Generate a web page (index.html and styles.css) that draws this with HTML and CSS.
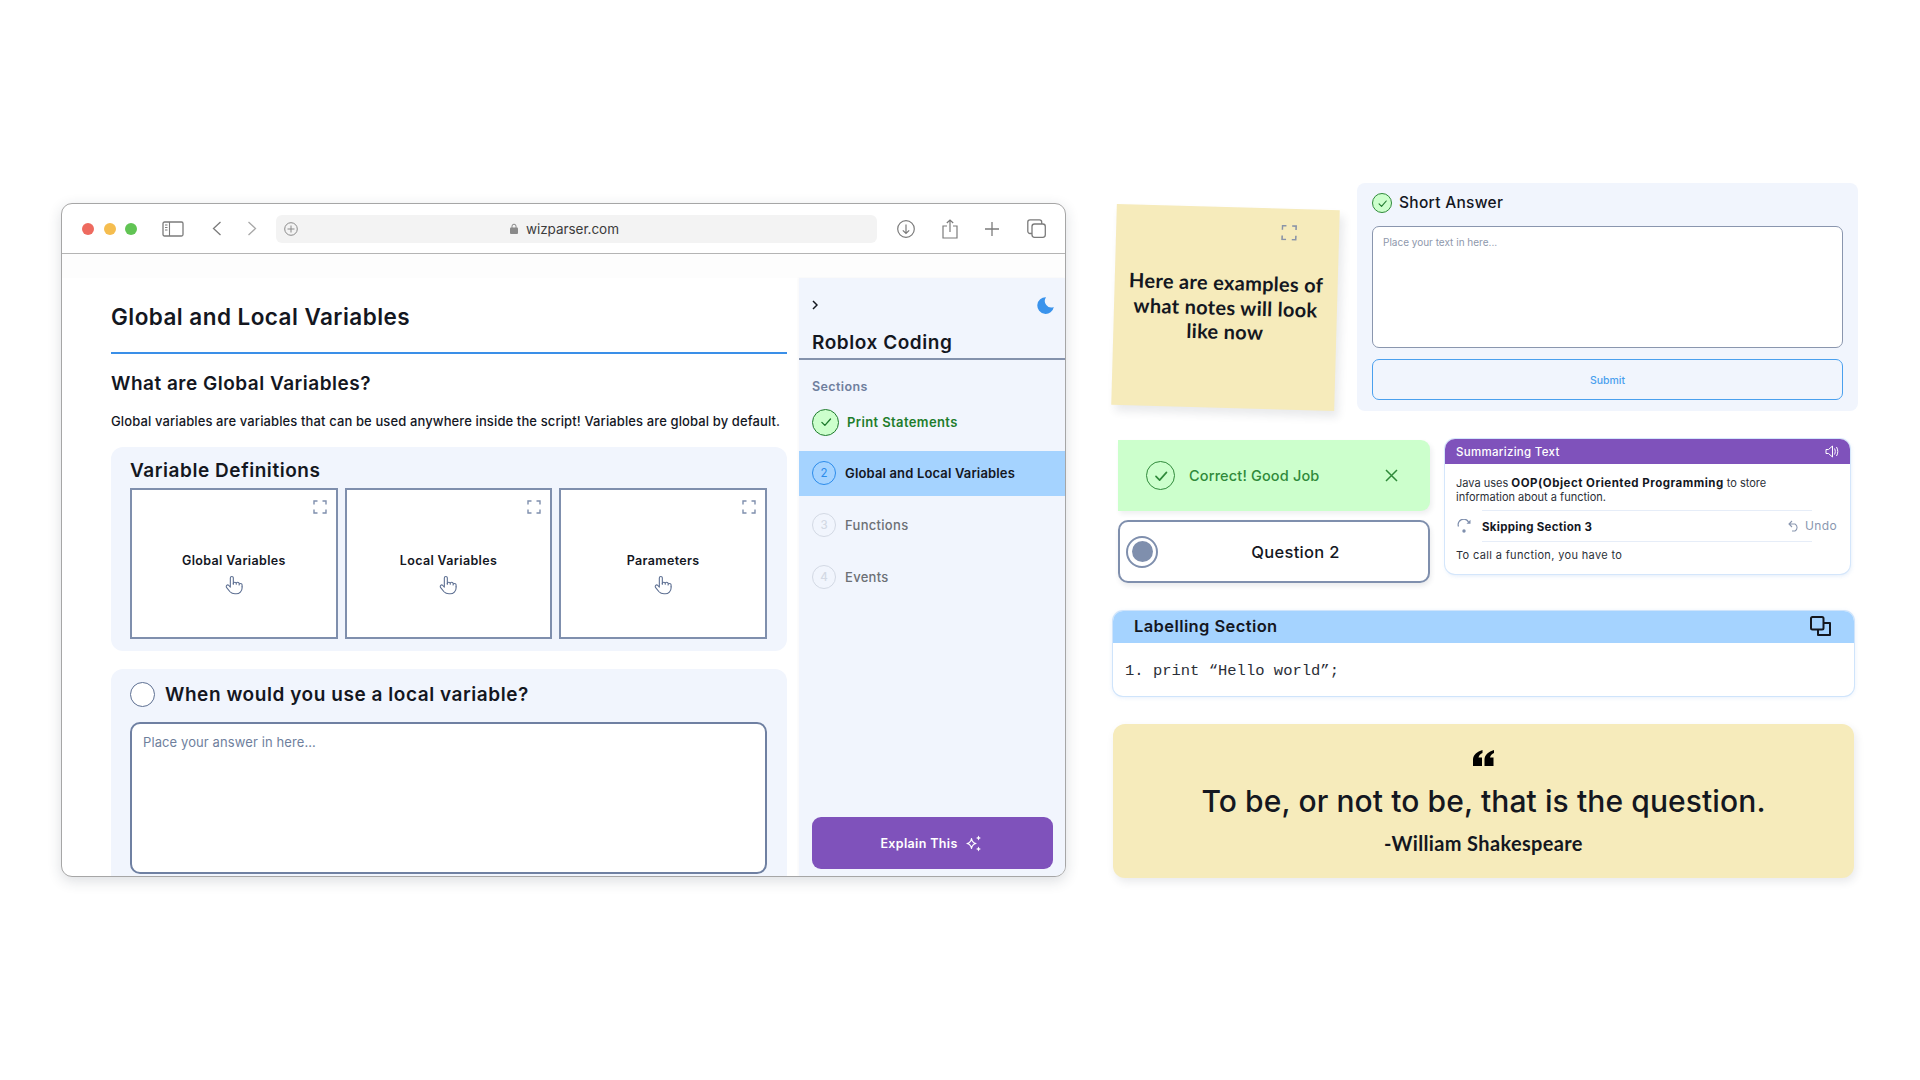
FILE: index.html
```html
<!DOCTYPE html>
<html lang="en">
<head>
<meta charset="utf-8">
<title>Wizparser UI components</title>
<link rel="stylesheet" href="styles.css">
</head>
<body>
<svg class="defs" width="0" height="0" aria-hidden="true">
  <symbol id="expand" viewBox="0 0 14 14"><path d="M1 4.500V1h3.500M9.500 1H13v3.500M13 9.500V13H9.500M4.500 13H1V9.500" fill="none" stroke="currentColor" stroke-width="1.400"/></symbol>
  <symbol id="hand" viewBox="0 0 24 24"><g fill="none" stroke="currentColor" stroke-width="1.300" stroke-linecap="round" stroke-linejoin="round"><path d="M20.500 14v-2a1.800 1.800 0 0 0-3.600 0M17 11.500v-1a1.800 1.800 0 0 0-3.600 0M13.500 11v-.5a1.800 1.800 0 0 0-3.600 0"/><path d="M10 11V3.500a1.800 1.800 0 0 0-3.600 0V14.500L4.600 12.600a1.800 1.800 0 0 0-2.600 2.500l4 5c1.500 1.600 3.200 2.400 6 2.400h1.500a7 7 0 0 0 7-7V14"/></g></symbol>
  <symbol id="check" viewBox="0 0 24 24"><path d="M6.500 12.500l4 4 7.500-8.500" fill="none" stroke="currentColor" stroke-width="1.800" stroke-linecap="round" stroke-linejoin="round"/></symbol>
</svg>

<main class="page">
  <section class="window">
    <header class="toolbar">
      <span class="dot dot-red"></span><span class="dot dot-amber"></span><span class="dot dot-green"></span>
      <svg class="tool tool-side" width="22" height="16" viewBox="0 0 22 16"><rect x="1" y="1" width="20" height="14" rx="1.500" fill="none" stroke="currentColor" stroke-width="1.300"/><path d="M7.500 1v14M3 4h2.500M3 6.500h2.500M3 9h2.500" fill="none" stroke="currentColor" stroke-width="1.100"/></svg>
      <svg class="tool tool-back" width="10" height="15" viewBox="0 0 10 15"><path d="M8.500 1L1.500 7.500l7 6.500" fill="none" stroke="currentColor" stroke-width="1.300"/></svg>
      <svg class="tool tool-fwd" width="10" height="15" viewBox="0 0 10 15"><path d="M1.500 1l7 6.500-7 6.500" fill="none" stroke="#a8a8a8" stroke-width="1.300"/></svg>
      <div class="urlbar">
        <svg class="url-plus" width="14" height="14" viewBox="0 0 14 14"><circle cx="7" cy="7" r="6.300" fill="none" stroke="currentColor" stroke-width="1"/><path d="M7 3.500v7M3.500 7h7" stroke="currentColor" stroke-width="1"/></svg>
        <svg class="url-lock" width="8" height="11" viewBox="0 0 8 11"><path d="M2 5V3.200a2 2 0 0 1 4 0V5" fill="none" stroke="currentColor" stroke-width="1"/><rect y="4.500" width="8" height="6.500" rx="1" fill="currentColor"/></svg>
        <span class="url-text">wizparser.com</span>
      </div>
      <svg class="tool tool-dl" width="18" height="18" viewBox="0 0 18 18"><circle cx="9" cy="9" r="8.300" fill="none" stroke="currentColor" stroke-width="1.200"/><path d="M9 4.500v9M5.800 10.300L9 13.500l3.200-3.200" fill="none" stroke="currentColor" stroke-width="1.200"/></svg>
      <svg class="tool tool-share" width="16" height="20" viewBox="0 0 16 20"><path d="M5 7H1v12h14V7h-4M8 13V1M4.800 4L8 1l3.200 3" fill="none" stroke="currentColor" stroke-width="1.200"/></svg>
      <svg class="tool tool-plus" width="14" height="14" viewBox="0 0 14 14"><path d="M7 0v14M0 7h14" fill="none" stroke="currentColor" stroke-width="1.300"/></svg>
      <svg class="tool tool-tabs" width="19" height="19" viewBox="0 0 19 19"><rect x="5" y="5" width="13.300" height="13.300" rx="2.500" fill="none" stroke="currentColor" stroke-width="1.300"/><path d="M5 14.500H3a2.200 2.200 0 0 1-2.200-2.200V3A2.200 2.200 0 0 1 3 .8h9.500A2.200 2.200 0 0 1 14.700 3v2" fill="none" stroke="currentColor" stroke-width="1.300"/></svg>
    </header>
    <div class="band"></div>
    <div class="app">
      <div class="content">
        <h1 class="page-title">Global and Local Variables</h1>
        <h2 class="section-title">What are Global Variables?</h2>
        <p class="lead">Global variables are variables that can be used anywhere inside the script! Variables are global by default.</p>

        <section class="panel panel-defs">
          <h3 class="panel-title">Variable Definitions</h3>
          <div class="flip-grid">
            <div class="flip"><svg class="flip-expand"><use href="#expand"/></svg><span class="flip-label">Global Variables</span><svg class="flip-hand"><use href="#hand"/></svg></div>
            <div class="flip"><svg class="flip-expand"><use href="#expand"/></svg><span class="flip-label">Local Variables</span><svg class="flip-hand"><use href="#hand"/></svg></div>
            <div class="flip"><svg class="flip-expand"><use href="#expand"/></svg><span class="flip-label">Parameters</span><svg class="flip-hand"><use href="#hand"/></svg></div>
          </div>
        </section>

        <section class="panel panel-question">
          <div class="question-head"><span class="q-circle"></span><h3 class="question-title">When would you use a local variable?</h3></div>
          <div class="answer-box">Place your answer in here...</div>
        </section>
      </div>

      <aside class="sidebar">
        <div class="side-top">
          <svg width="6" height="10" viewBox="0 0 6 10"><path d="M1 1l4 4-4 4" fill="none" stroke="#14171f" stroke-width="1.500"/></svg>
          <svg width="17" height="17" viewBox="0 0 17 17"><path d="M9 .3A8.300 8.300 0 1 0 16.800 10 6.500 6.500 0 0 1 9 .3z" fill="#3a93ec"/></svg>
        </div>
        <h2 class="side-title">Roblox Coding</h2>
        <div class="side-label">Sections</div>
        <ul class="steps">
          <li class="step step-done"><span class="badge badge-done"><svg width="18" height="18"><use href="#check"/></svg></span>Print Statements</li>
          <li class="step step-active"><span class="badge badge-active">2</span>Global and Local Variables</li>
          <li class="step"><span class="badge">3</span>Functions</li>
          <li class="step"><span class="badge">4</span>Events</li>
        </ul>
        <button class="explain">Explain This
          <svg width="17" height="17" viewBox="0 0 17 17"><path d="M6.500 3.500C7 6.500 8 8 11 8.500 8 9 7 10.500 6.500 13.500 6 10.500 5 9 2 8.500 5 8 6 6.500 6.500 3.500z" fill="none" stroke="#fff" stroke-width="1.200" stroke-linejoin="round"/><path d="M13.500.5l.8 1.700 1.700.8-1.700.8-.8 1.700-.8-1.700L11 3l1.700-.8zM13.500 11.500l.8 1.700 1.700.8-1.700.8-.8 1.700-.8-1.700-1.700-.8 1.700-.8z" fill="#fff"/></svg>
        </button>
      </aside>
    </div>
  </section>

  <div class="gallery">
    <div class="row row-top">
      <article class="note">
        <svg class="note-expand"><use href="#expand"/></svg>
        <p class="note-text">Here are examples of what notes will look like now</p>
      </article>
      <section class="short">
        <div class="short-head">
          <span class="short-check"><svg width="15" height="15"><use href="#check"/></svg></span>
          <h3 class="short-title">Short Answer</h3>
        </div>
        <div class="short-box">Place your text in here...</div>
        <div class="submit">Submit</div>
      </section>
    </div>

    <div class="row row-mid">
      <div class="mid-left">
        <div class="toast">
          <span class="toast-check"><svg width="22" height="22"><use href="#check"/></svg></span>
          <span class="toast-text">Correct! Good Job</span>
          <svg class="toast-x" width="13" height="13" viewBox="0 0 13 13"><path d="M1 1l11 11M12 1L1 12" stroke="#2f8a3a" stroke-width="1.500" fill="none"/></svg>
        </div>
        <div class="q-option">
          <span class="radio"><span class="radio-dot"></span></span>
          <span class="q-option-text">Question 2</span>
        </div>
      </div>
      <section class="summary">
        <header class="summary-head"><span>Summarizing Text</span>
          <svg width="14" height="13" viewBox="0 0 14 13"><path d="M1 4.500h2.500L7.500 1v11L3.500 8.500H1zM9.500 3.500c1 1.800 1 4.200 0 6M11.500 2c1.700 2.800 1.700 6.200 0 9" fill="none" stroke="#fff" stroke-width="1"/></svg>
        </header>
        <p class="summary-text">Java uses <strong>OOP(Object Oriented Programming</strong> to store information about a function.</p>
        <div class="skip">
          <svg width="15" height="14" viewBox="0 0 15 14"><path d="M1.500 7.500A5.500 5.500 0 0 1 11.500 3" fill="none" stroke="#7f8fad" stroke-width="1.300"/><path d="M13.500 .8v4h-4z" fill="#7f8fad"/><circle cx="7" cy="12" r="1.700" fill="#7f8fad"/></svg>
          <span class="skip-text">Skipping Section 3</span>
          <span class="undo"><svg width="12" height="12" viewBox="0 0 12 12"><path d="M4 1L1 4l3 3M1 4h6a4 4 0 0 1 0 7H4" fill="none" stroke="#8a97b0" stroke-width="1.100"/></svg>Undo</span>
        </div>
        <p class="summary-last">To call a function, you have to</p>
      </section>
    </div>

    <section class="code">
      <header class="code-head"><h3 class="code-title">Labelling Section</h3>
        <svg width="21" height="20" viewBox="0 0 21 20"><rect x="1" y="1" width="12.500" height="12.500" rx="1.500" fill="none" stroke="#14171f" stroke-width="2"/><path d="M13.500 7H20v12H8v-5.500" fill="none" stroke="#14171f" stroke-width="2" stroke-linejoin="round"/></svg>
      </header>
      <div class="code-body">1. print “Hello world”;</div>
    </section>

    <section class="quote">
      <svg class="quote-mark" width="21" height="16" viewBox="0 0 21 16"><path d="M9.500 0C4 1.500.5 5 0 9v7h9V7.500H5.500C6 5.500 7.500 3.500 9.500 3zM21 0c-5.500 1.500-9 5-9.500 9v7h9V7.500H17c.5-2 2-4 4-4.500z" fill="#000"/></svg>
      <p class="quote-text">To be, or not to be, that is the question.</p>
      <p class="quote-by">-William Shakespeare</p>
    </section>
  </div>
</main>
</body>
</html>
```
FILE: styles.css
```css
* { box-sizing: border-box; }
html, body { margin: 0; height: 1080px; background: #fff; overflow: hidden; }
body { font-family: Inter, "Noto Sans", sans-serif; color: #14171f; }
h1, h2, h3, p, ul { margin: 0; padding: 0; }
.defs { position: absolute; }

.page { display: flex; align-items: flex-start; padding: 183px 0 0 61px; }

/* browser window */
.window { width: 1005px; height: 674px; margin-top: 20px; display: flex; flex-direction: column; border: 1px solid #a6a6a6; border-radius: 11px; overflow: hidden; background: #fff; box-shadow: 0 4px 14px rgba(40, 50, 70, .16); }
.toolbar { flex: none; height: 50px; display: flex; align-items: center; padding-left: 20px; border-bottom: 1.5px solid #b4b4b4; color: #7b7b7b; }
.dot { width: 12px; height: 12px; border-radius: 50%; margin-right: 9.500px; }
.dot-red { background: #ee6a5f; }
.dot-amber { background: #f5bd4f; }
.dot-green { background: #61c454; margin-right: 0; }
.tool { flex: none; }
.tool-side { margin-left: 25px; }
.tool-back { margin-left: 28px; }
.tool-fwd { margin-left: 25px; }
.urlbar { flex: none; width: 601px; height: 28px; margin-left: 19px; display: flex; align-items: center; padding-left: 8px; border-radius: 6px; background: #f3f3f3; color: #8a8a8a; }
.url-lock { margin-left: 212px; }
.url-text { margin-left: 8px; font-size: 13.500px; letter-spacing: -.05px; color: #3c3c3c; }
.tool-dl { margin-left: 20px; }
.tool-share { margin-left: 27px; }
.tool-plus { margin-left: 27px; }
.tool-tabs { margin-left: 28px; }
.band { flex: none; height: 24px; background: #fdfdfd; }

.app { flex: 1; min-height: 0; display: flex; }
.content { flex: 1; min-width: 0; padding: 25px 12px 0 49px; overflow: hidden; }
.page-title { font-size: 22.500px; line-height: 28px; font-weight: 600; letter-spacing: .45px; padding-bottom: 21px; border-bottom: 2px solid #3a8fe8; }
.section-title { margin-top: 18px; font-size: 19px; line-height: 24px; font-weight: 600; letter-spacing: .5px; }
.lead { margin-top: 16px; font-size: 13px; line-height: 18px; font-weight: 450; letter-spacing: .115px; white-space: nowrap; }
.panel { background: #f1f5fd; border-radius: 12px; padding: 0 20px 0 19px; }
.panel-defs { margin-top: 17px; padding-top: 12px; padding-bottom: 12px; }
.panel-title { font-size: 19px; line-height: 24px; font-weight: 600; letter-spacing: .55px; }
.flip-grid { margin-top: 5px; display: grid; grid-template-columns: repeat(3, 1fr); gap: 7px; }
.flip { position: relative; height: 151px; display: flex; flex-direction: column; align-items: center; padding-top: 63px; background: #fff; border: 2px solid #7f8fad; }
.flip-label { font-size: 12.500px; line-height: 16px; font-weight: 600; letter-spacing: .35px; }
.flip-hand { width: 20px; height: 20px; margin-top: 6px; margin-left: 2px; color: #5d6f92; }
.flip-expand { position: absolute; top: 10px; right: 9px; width: 14px; height: 14px; color: #7f8fad; }
.panel-question { margin-top: 18px; padding-top: 13px; padding-bottom: 20px; }
.question-head { display: flex; align-items: center; gap: 10px; }
.q-circle { flex: none; width: 25px; height: 25px; border: 1.500px solid #5d6f92; border-radius: 50%; background: #fff; }
.question-title { font-size: 19px; line-height: 24px; font-weight: 600; letter-spacing: .55px; }
.answer-box { margin-top: 15px; height: 152px; padding: 10px 11px; background: #fff; border: 2px solid #6f80a2; border-radius: 10px; font-size: 13px; line-height: 16px; letter-spacing: .1px; color: #6f7f9d; }

/* sidebar */
.sidebar { flex: none; width: 266px; display: flex; flex-direction: column; background: #f1f5fd; box-shadow: -1px 0 2px rgba(40, 50, 70, .04); }
.side-top { display: flex; align-items: center; justify-content: space-between; height: 18px; margin-top: 18px; padding: 0 11px 0 13px; }
.side-title { margin-top: 17px; padding: 0 13px 3px; font-size: 19px; line-height: 24px; font-weight: 600; letter-spacing: .55px; border-bottom: 2px solid #8492ac; }
.side-label { margin-top: 19px; padding-left: 13px; font-size: 12.500px; line-height: 16px; font-weight: 600; letter-spacing: .4px; color: #6f7f9d; }
.steps { list-style: none; margin-top: 4px; display: flex; flex-direction: column; gap: 6.500px; }
.step { height: 45px; display: flex; align-items: center; gap: 9px; padding: 1px 0 0 13px; font-size: 13px; font-weight: 500; letter-spacing: .3px; color: #6c7075; }
.badge { flex: none; width: 24px; height: 24px; display: flex; align-items: center; justify-content: center; border: 1.500px solid #d3d9e4; border-radius: 50%; font-size: 11.500px; letter-spacing: 0; color: #d3d9e4; }
.step-done { gap: 8px; color: #1e7d2c; font-weight: 600; letter-spacing: .38px; }
.badge-done { width: 27px; height: 27px; background: #ccffcc; border-color: #1f7a2e; color: #1f7a2e; }
.step-active { padding-top: 0; background: #a5d3ff; color: #14171f; font-weight: 600; letter-spacing: .15px; }
.badge-active { border-color: #2c8ceb; color: #2c8ceb; font-weight: 400; }
.explain { flex: none; height: 52px; margin: auto 12px 7px 13px; display: flex; align-items: center; justify-content: center; gap: 7px; padding: 0 3px 0 0; border: 0; border-radius: 9px; background: #7f52bb; color: #fff; font: 600 12.500px Inter, "Noto Sans", sans-serif; letter-spacing: .35px; }

/* right column */
.gallery { flex: none; width: 745px; margin-left: 47px; }
.row { display: flex; align-items: flex-start; }
.note { flex: none; position: relative; width: 223px; height: 201px; margin: 24px 0 0 .5px; padding-top: 63px; background: #f6ebbb; transform: rotate(1.6deg); box-shadow: 4px 6px 8px rgba(40, 50, 70, .1); }
.note-expand { position: absolute; top: 16px; right: 42px; width: 16px; height: 16px; color: #8a94a8; }
.note-text { padding: 0 10px; text-align: center; font-family: Lato, sans-serif; font-size: 20px; line-height: 24.500px; font-weight: 700; letter-spacing: .3px; }
.short { flex: none; width: 501px; height: 228px; margin-left: 20.500px; padding: 10px 15px 0; background: #f1f5fd; border-radius: 8px; }
.short-head { display: flex; align-items: center; gap: 7px; }
.short-check { flex: none; width: 20px; height: 20px; display: flex; align-items: center; justify-content: center; background: #ccffcc; border: 1.200px solid #2f8a3a; border-radius: 50%; color: #1f7a2e; }
.short-title { font-size: 15.500px; line-height: 20px; font-weight: 500; letter-spacing: .3px; }
.short-box { margin-top: 13px; height: 122px; padding: 8px 10px; background: #fff; border: 1.500px solid #8a96ae; border-radius: 7px; font-size: 10px; line-height: 14px; color: #8e98ac; }
.submit { margin-top: 11px; height: 41px; display: flex; align-items: center; justify-content: center; padding-top: 2px; border: 1.500px solid #4aa0ee; border-radius: 7px; font-size: 10.500px; font-weight: 500; color: #4aa0ee; }

.row-mid { margin-top: 28px; height: 144px; }
.mid-left { flex: none; width: 312px; margin: 1px 0 0 5px; display: flex; flex-direction: column; gap: 9px; }
.toast { height: 71px; display: flex; align-items: center; padding-left: 28px; background: #ccffcc; border-radius: 0 9px 9px 0; box-shadow: 2px 3px 5px rgba(40, 50, 70, .08); }
.toast-check { flex: none; width: 29px; height: 29px; display: flex; align-items: center; justify-content: center; border: 1.500px solid #2f8a3a; border-radius: 50%; color: #2f8a3a; }
.toast-text { width: 196px; margin-left: 14px; font-size: 14.500px; font-weight: 500; letter-spacing: .15px; color: #2f8a3a; }
.q-option { position: relative; height: 63px; display: flex; align-items: center; justify-content: center; padding-left: 43px; background: #fff; border: 2px solid #7f8fad; border-radius: 10px; box-shadow: 1px 3px 5px rgba(40, 50, 70, .1); }
.radio { position: absolute; left: 6px; top: 13.500px; width: 32px; height: 32px; display: flex; align-items: center; justify-content: center; border: 2px solid #7f8fad; border-radius: 50%; background: #fff; }
.radio-dot { width: 21px; height: 21px; border-radius: 50%; background: #7f8fad; }
.q-option-text { font-size: 16.500px; font-weight: 500; letter-spacing: .3px; }
.summary { flex: none; width: 405px; height: 135px; margin-left: 15px; background: #fff; border-radius: 10px; overflow: hidden; box-shadow: 0 0 0 1px #d4e6fb, 1px 2px 4px rgba(90, 150, 230, .18); }
.summary-head { height: 25px; display: flex; align-items: center; justify-content: space-between; padding: 0 11px; background: #7f52bb; color: #fff; font-size: 11.500px; font-weight: 500; letter-spacing: .3px; }
.summary-text { margin-top: 12px; padding: 0 11px; width: 345px; font-size: 11px; line-height: 14px; color: #2b2f38; }
.summary-text strong { font-size: 11.500px; font-weight: 700; letter-spacing: .5px; color: #14171f; }
.skip { position: relative; display: flex; align-items: center; height: 32px; margin: 6px 38px 0 37px; padding-top: 2px; border-top: 1px solid #e6edf8; border-bottom: 1px solid #e6edf8; }
.skip > svg { position: absolute; left: -25px; top: 8px; }
.skip-text { font-size: 11.500px; font-weight: 700; letter-spacing: .3px; }
.undo { position: absolute; left: 306px; top: 7px; display: flex; align-items: center; gap: 5px; font-size: 12px; letter-spacing: .4px; color: #8a97b0; white-space: nowrap; }
.summary-last { margin-top: 6px; padding: 0 11px; font-size: 11px; line-height: 14px; letter-spacing: .35px; color: #2b2f38; }

.code { width: 741px; height: 85px; margin-top: 28px; background: #fff; border-radius: 10px; overflow: hidden; box-shadow: 0 0 0 1px #cfe4fb, 0 1px 5px rgba(90, 150, 230, .2); }
.code-head { height: 32px; display: flex; align-items: flex-start; justify-content: space-between; padding: 5px 23px 0 21px; background: #a5d3ff; }
.code-title { font-size: 16.500px; line-height: 20px; font-weight: 600; letter-spacing: .4px; }
.code-body { padding: 18px 12px; font-family: "Liberation Mono", monospace; font-size: 15.500px; line-height: 20px; color: #2b2f38; }
.quote { width: 741px; height: 154px; margin-top: 28px; display: flex; flex-direction: column; align-items: center; padding-top: 26px; background: #f6ebbb; border-radius: 12px; box-shadow: 2px 4px 8px rgba(40, 50, 70, .1); }
.quote-mark { flex: none; }
.quote-text { margin-top: 17px; font-size: 30px; line-height: 36px; font-weight: 500; letter-spacing: .1px; white-space: nowrap; }
.quote-by { margin-top: 12px; font-family: Lato, sans-serif; font-size: 20px; line-height: 24px; font-weight: 700; letter-spacing: .35px; }
```
